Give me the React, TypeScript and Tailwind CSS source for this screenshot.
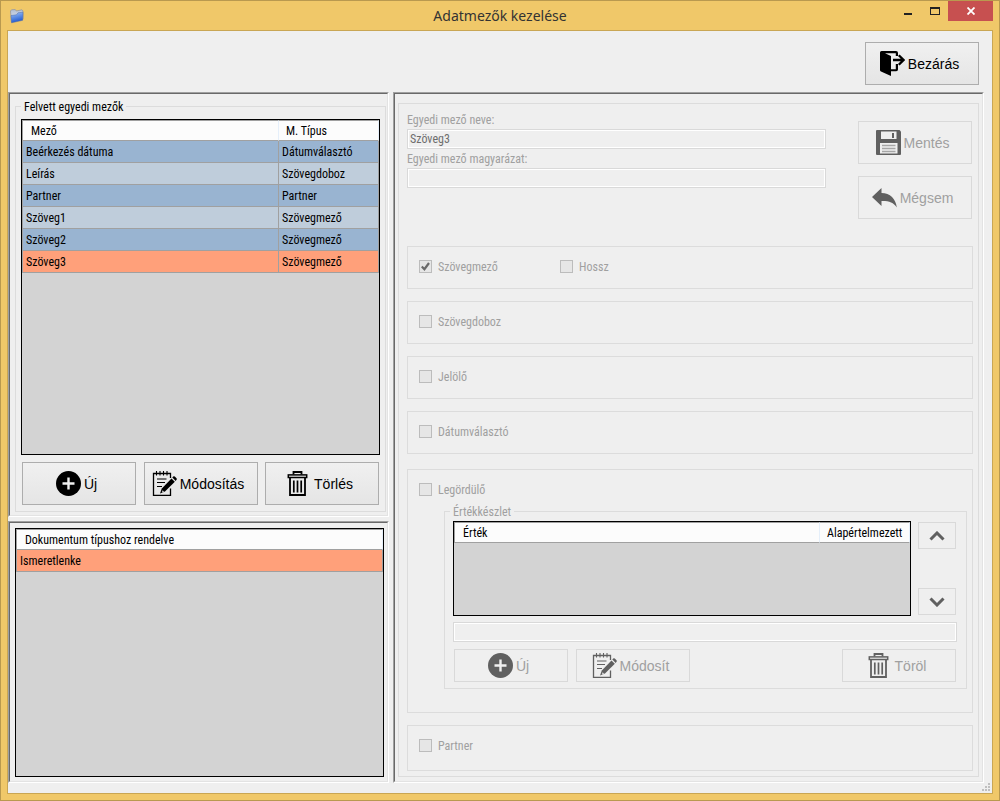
import { useId, type ReactNode } from "react";

function FolderIcon() {
  return (
    <svg width="16" height="16" viewBox="0 0 16 16" aria-hidden="true">
      <defs>
        <linearGradient id="folder-back" x1="0" y1="0" x2="0" y2="1">
          <stop offset="0" stopColor="#b4bfd2" />
          <stop offset="1" stopColor="#e4ecf8" />
        </linearGradient>
        <linearGradient id="folder-front" x1="0" y1="0" x2="0.3" y2="1">
          <stop offset="0" stopColor="#a9c8f4" />
          <stop offset="0.5" stopColor="#5f8fe6" />
          <stop offset="1" stopColor="#2358cc" />
        </linearGradient>
      </defs>
      <path d="M1.500 3 L2.500 1.800 L6.300 1.600 L7.300 3 L13 1.800 L14 3 L14 11 L2.500 14 Z" fill="url(#folder-back)" stroke="#7d8aa5" strokeWidth="0.600" />
      <path d="M2 7.500 L7.500 6.800 L9 4.800 L14 4.200 L13.700 12.300 L2.500 14.800 Z" fill="url(#folder-front)" stroke="#4a69ab" strokeWidth="0.500" />
    </svg>
  );
}

function ExitIcon() {
  return (
    <svg width="25" height="25" viewBox="0 0 25 25" fill="currentColor" aria-hidden="true">
      <path d="M0 1.500 Q0 0 1.500 0 H16 Q18 0 18 2 V5 H15.800 V2.200 H5 L11 5 V18.200 H15.800 V13 H18 V18.500 Q18 20.300 16.200 20.300 H11 V25 L1 20.500 Q0 20 0 19 Z" />
      <path d="M13 9 H23.500 M18.800 4.200 L23.600 9 L18.800 13.800" fill="none" stroke="currentColor" strokeWidth="2.300" />
    </svg>
  );
}

function PlusCircleIcon() {
  return (
    <svg width="25" height="25" viewBox="0 0 25 25" aria-hidden="true">
      <circle cx="12.500" cy="12.500" r="12.500" fill="currentColor" />
      <path d="M12.500 6.500 V18.500 M6.500 12.500 H18.500" stroke="#f0f0f0" strokeWidth="2.400" />
    </svg>
  );
}

function NotepadIcon() {
  return (
    <svg width="25" height="25" viewBox="0 0 25 25" fill="none" stroke="currentColor" aria-hidden="true">
      <path d="M18.500 7 V2.500 H1.500 V24.300 H18.500 V17.500" strokeWidth="1.300" />
      <path d="M4.500 0 V4.500 M8 0 V4.500 M11.500 0 V4.500 M15 0 V4.500" strokeWidth="1.100" />
      <path d="M5 8 H14.500 M5 11.500 H13 M5 15.500 H10" strokeWidth="1.100" />
      <path d="M8 22.500 L9.800 17.500 L19.500 7.500 L22.800 10.800 L13 20.500 Z" fill="currentColor" stroke="none" />
      <path d="M20.300 6.600 L21.200 5.600 Q22 4.900 22.800 5.600 L24.500 7.200 Q25.200 8 24.500 8.800 L23.700 9.900 Z" fill="currentColor" stroke="none" />
      <path d="M10 21.500 L10.600 19.300 L12 20.700 Z" fill="#f0f0f0" stroke="none" />
    </svg>
  );
}

function TrashIcon() {
  return (
    <svg width="25" height="25" viewBox="0 0 25 25" fill="none" stroke="currentColor" aria-hidden="true">
      <path d="M7.500 3.500 V1 H15.500 V3.500" strokeWidth="1.800" />
      <rect x="2.300" y="3.900" width="18.400" height="2.600" strokeWidth="1.500" />
      <path d="M4 7 V24 H19 V7" strokeWidth="1.800" />
      <path d="M7.800 9.500 V21.500 M11.500 9.500 V21.500 M15.200 9.500 V21.500" strokeWidth="1.700" />
    </svg>
  );
}

function FloppyIcon() {
  return (
    <svg width="25" height="25" viewBox="0 0 25 25" aria-hidden="true">
      <path d="M1 0 H23.500 L25 1.500 V24 Q25 25 24 25 H1 Q0 25 0 24 V1 Q0 0 1 0 Z" fill="currentColor" />
      <rect x="5" y="1.500" width="15.500" height="7.500" fill="#efefef" />
      <rect x="16" y="3" width="2" height="5" fill="currentColor" />
      <rect x="4" y="13" width="17.500" height="10.500" fill="#efefef" />
      <path d="M6 15.500 H19.500 M6 18.500 H19.500 M6 21.500 H19.500" stroke="#a6a6a6" strokeWidth="1.300" />
    </svg>
  );
}

function UndoIcon() {
  return (
    <svg width="25" height="25" viewBox="0 0 25 25" fill="currentColor" aria-hidden="true">
      <path d="M0 12 L9.500 3 V8 C18 8 24 14 24.800 22.500 C21.500 17.500 17 15.800 9.500 16 V21 Z" />
    </svg>
  );
}

function ChevronIcon({ down = false }: { down?: boolean }) {
  return (
    <svg width="16" height="10" viewBox="0 0 16 10" fill="none" stroke="currentColor" strokeWidth="3" aria-hidden="true">
      <path d={down ? "M1.500 1.500 L8 8 L14.500 1.500" : "M1.500 8.500 L8 2 L14.500 8.500"} />
    </svg>
  );
}

function PushButton({ icon, children, disabled = false, compact = false }: { icon: ReactNode; children: ReactNode; disabled?: boolean; compact?: boolean }) {
  const height = compact ? "h-[33px]" : "h-[43px]";
  const look = disabled
    ? "border-[#d9d9d9] bg-[#efefef]"
    : "border-[#adadad] bg-linear-to-b from-[#f0f0f0] to-[#e5e5e5] hover:border-[#7eb4ea]";
  return (
    <button type="button" disabled={disabled} className={`flex w-[114px] shrink-0 items-center justify-center gap-[3px] border pr-[5px] font-['Liberation_Sans',Arial,sans-serif] text-sm ${height} ${look}`}>
      <span className={disabled ? "text-[#606060]" : "text-black"}>{icon}</span>
      <span className={disabled ? "text-[#a0a0a0]" : "text-black"}>{children}</span>
    </button>
  );
}

function ArrowButton({ down = false, label }: { down?: boolean; label: string }) {
  return (
    <button type="button" disabled aria-label={label} className="flex h-[27px] w-[38px] items-center justify-center border border-[#d9d9d9] bg-[#efefef] text-[#606060]">
      <ChevronIcon down={down} />
    </button>
  );
}

function SunkenPanel({ children }: { children: ReactNode }) {
  return (
    <div className="flex min-w-0 border border-t-[#a0a0a0] border-r-white border-b-white border-l-[#a0a0a0]">
      <div className="flex min-w-0 flex-1 border border-t-[#696969] border-r-[#e3e3e3] border-b-[#e3e3e3] border-l-[#696969]">
        {children}
      </div>
    </div>
  );
}

function HeaderCell({ children, first = false }: { children: ReactNode; first?: boolean }) {
  return (
    <th scope="col" className={`h-[21px] border-t border-r border-b border-t-[#a0a0a0] border-r-[#e5effa] border-b-[#a0a0a0] bg-[#fcfcfc] p-0 pt-[2px] text-left font-normal ${first ? "border-l border-l-[#a0a0a0] pl-2" : "pl-[7px]"}`}>
      {children}
    </th>
  );
}

function Cell({ children, first = false }: { children: ReactNode; first?: boolean }) {
  return (
    <td className={`h-[22px] border-r border-b border-[#a0a0a0] p-0 pt-[2px] pl-[3px] ${first ? "border-l" : ""}`}>{children}</td>
  );
}

function TextBox({ id, value = "", label }: { id?: string; value?: string; label?: string }) {
  return (
    <div className="flex h-5 border border-[#d9d9d9] bg-white p-px">
      <input id={id} type="text" disabled defaultValue={value} aria-label={label} className="w-full min-w-0 bg-[#efefef] px-px text-[#6d6d6d]" />
    </div>
  );
}

function TextField({ label, value = "" }: { label: string; value?: string }) {
  const id = useId();
  return (
    <>
      <label htmlFor={id} className="h-[19px] leading-[21px] text-[#a0a0a0]">{label}</label>
      <TextBox id={id} value={value} />
    </>
  );
}

function CheckOption({ label, checked = false, className = "" }: { label: string; checked?: boolean; className?: string }) {
  return (
    <label className={`flex h-[15px] items-center gap-[6px] text-[#a0a0a0] ${className}`}>
      <span className="grid size-[13px] place-items-center">
        <input type="checkbox" disabled defaultChecked={checked} className="col-start-1 row-start-1 size-[13px] appearance-none border border-[#bcbcbc] bg-[#e6e6e6]" />
        {checked && (
          <svg width="9" height="9" viewBox="0 0 9 9" className="col-start-1 row-start-1 text-[#6a6a6a]" fill="none" stroke="currentColor" strokeWidth="2.200" aria-hidden="true">
            <path d="M0.800 4.500 L3.400 7.200 L8 1" />
          </svg>
        )}
      </span>
      <span className="pt-[2px]">{label}</span>
    </label>
  );
}

function OptionGroup({ children, className = "h-[43px]" }: { children: ReactNode; className?: string }) {
  return <div className={`border border-[#dcdcdc] pt-3 ${className}`}>{children}</div>;
}

const fields = [
  { name: "Beérkezés dátuma", type: "Dátumválasztó" },
  { name: "Leírás", type: "Szövegdoboz" },
  { name: "Partner", type: "Partner" },
  { name: "Szöveg1", type: "Szövegmező" },
  { name: "Szöveg2", type: "Szövegmező" },
  { name: "Szöveg3", type: "Szövegmező" },
];
const selectedField = "Szöveg3";

function rowColor(name: string, index: number) {
  if (name === selectedField) return "bg-[#ffa07a]";
  return index % 2 === 0 ? "bg-[#99b4d1]" : "bg-[#bfcddb]";
}

function TitleBar() {
  return (
    <header className="grid h-[29px] grid-cols-[1fr_auto_1fr] items-start">
      <div className="pt-[7px] pl-2">
        <FolderIcon />
      </div>
      <h1 className="font-['Noto_Sans','Open_Sans',sans-serif] text-sm leading-[29px] text-[#333333]">Adatmezők kezelése</h1>
      <div className="flex justify-end pr-[6px]">
        <button type="button" aria-label="Kis méret" className="flex h-5 w-[27px] items-center justify-center pl-[2px] text-[#222222]">
          <svg width="9" height="20" viewBox="0 0 9 20"><rect y="12" width="8" height="2" fill="currentColor" /></svg>
        </button>
        <button type="button" aria-label="Teljes méret" className="flex h-5 w-[27px] items-center justify-center pl-[2px] text-[#222222]">
          <svg width="11" height="20" viewBox="0 0 11 20"><path d="M0 6 H10 V14 H0 Z M1 8 V13 H9 V8 Z" fill="currentColor" fillRule="evenodd" /></svg>
        </button>
        <button type="button" aria-label="Bezárás" className="flex h-5 w-[45px] items-center justify-center bg-[#c75050] text-white">
          <svg width="8" height="8" viewBox="0 0 8 8" stroke="currentColor" strokeWidth="1.800"><path d="M0.500 0.500 L7.500 7.500 M7.500 0.500 L0.500 7.500" /></svg>
        </button>
      </div>
    </header>
  );
}

function FieldListPanel() {
  return (
    <SunkenPanel>
      <fieldset className="mt-[6px] mr-px mb-[3px] ml-[5px] flex min-w-0 flex-1 flex-col border border-[#dcdcdc] px-[5px] pt-[6px] pb-[6px]">
        <legend className="h-[13px] px-[3px] leading-[15px]">Felvett egyedi mezők</legend>
        <div className="flex-1 border border-black bg-[#d3d3d3]">
          <table className="w-full table-fixed border-separate border-spacing-0">
            <colgroup>
              <col className="w-[72%]" />
              <col />
            </colgroup>
            <thead>
              <tr>
                <HeaderCell first>Mező</HeaderCell>
                <HeaderCell>M. Típus</HeaderCell>
              </tr>
            </thead>
            <tbody>
              {fields.map((field, index) => (
                <tr key={field.name} className={rowColor(field.name, index)}>
                  <Cell first>{field.name}</Cell>
                  <Cell>{field.type}</Cell>
                </tr>
              ))}
            </tbody>
          </table>
        </div>
        <div className="mt-[7px] flex justify-between px-px">
          <PushButton icon={<PlusCircleIcon />}>Új</PushButton>
          <PushButton icon={<NotepadIcon />}>Módosítás</PushButton>
          <PushButton icon={<TrashIcon />}>Törlés</PushButton>
        </div>
      </fieldset>
    </SunkenPanel>
  );
}

function DocumentTypePanel() {
  return (
    <SunkenPanel>
      <div className="mt-[5px] mr-[3px] mb-1 ml-[5px] min-w-0 flex-1 border border-black bg-[#d3d3d3]">
        <table className="w-full border-separate border-spacing-0">
          <thead>
            <tr>
              <HeaderCell first>Dokumentum típushoz rendelve</HeaderCell>
            </tr>
          </thead>
          <tbody>
            <tr className="bg-[#ffa07a]">
              <Cell first>Ismeretlenke</Cell>
            </tr>
          </tbody>
        </table>
      </div>
    </SunkenPanel>
  );
}

function ValueListGroup() {
  return (
    <fieldset className="mt-2 mr-[5px] ml-9 min-w-0 border border-[#dcdcdc] pt-[3px] pr-[9px] pb-[6px] pl-[5px]">
      <legend className="h-[13px] px-[3px] leading-[15px] text-[#a0a0a0]">Értékkészlet</legend>
      <div className="flex flex-col pl-[3px]">
        <div className="flex gap-[7px] pr-px">
          <div className="h-[95px] flex-1 border border-black bg-[#d3d3d3]">
            <table className="w-full table-fixed border-separate border-spacing-0">
              <colgroup>
                <col />
                <col className="w-[90px]" />
              </colgroup>
              <thead>
                <tr>
                  <HeaderCell first>Érték</HeaderCell>
                  <HeaderCell>Alapértelmezett</HeaderCell>
                </tr>
              </thead>
            </table>
          </div>
          <div className="flex flex-col justify-between py-px">
            <ArrowButton label="Fel" />
            <ArrowButton label="Le" down />
          </div>
        </div>
        <div className="mt-[6px]">
          <TextBox label="Érték" />
        </div>
        <div className="mt-[7px] flex gap-2 px-px">
          <PushButton icon={<PlusCircleIcon />} disabled compact>Új</PushButton>
          <PushButton icon={<NotepadIcon />} disabled compact>Módosít</PushButton>
          <div className="ml-auto">
            <PushButton icon={<TrashIcon />} disabled compact>Töröl</PushButton>
          </div>
        </div>
      </div>
    </fieldset>
  );
}

function EditorPanel() {
  return (
    <SunkenPanel>
      <div className="mt-[9px] mr-[3px] mb-1 ml-[3px] flex min-w-0 flex-1 flex-col border border-[#dcdcdc] pt-[6px] pr-[5px] pb-[5px] pl-2">
        <div className="mb-[27px] flex gap-8 pr-px">
          <div className="flex min-w-0 flex-1 flex-col">
            <TextField label="Egyedi mező neve:" value="Szöveg3" />
            <TextField label="Egyedi mező magyarázat:" />
          </div>
          <div className="flex flex-col gap-3 pt-[11px]">
            <PushButton icon={<FloppyIcon />} disabled>Mentés</PushButton>
            <PushButton icon={<UndoIcon />} disabled>Mégsem</PushButton>
          </div>
        </div>
        <div className="flex flex-1 flex-col gap-3">
          <OptionGroup>
            <div className="flex pl-[11px]">
              <CheckOption label="Szövegmező" checked className="w-[141px]" />
              <CheckOption label="Hossz" />
            </div>
          </OptionGroup>
          <OptionGroup>
            <CheckOption label="Szövegdoboz" className="pl-[11px]" />
          </OptionGroup>
          <OptionGroup>
            <CheckOption label="Jelölő" className="pl-[11px]" />
          </OptionGroup>
          <OptionGroup>
            <CheckOption label="Dátumválasztó" className="pl-[11px]" />
          </OptionGroup>
          <OptionGroup className="mt-[3px] flex-1 pb-5">
            <CheckOption label="Legördülő" className="pl-[11px]" />
            <ValueListGroup />
          </OptionGroup>
          <OptionGroup className="h-[46px]">
            <CheckOption label="Partner" className="pl-[11px]" />
          </OptionGroup>
        </div>
      </div>
    </SunkenPanel>
  );
}

function ResizeGrip() {
  return (
    <svg width="8" height="8" viewBox="0 0 8 8" className="absolute right-[2px] bottom-[2px]" fill="#bfbfbf" aria-hidden="true">
      <path d="M6 0h2v2h-2z M3 3h2v2h-2z M6 3h2v2h-2z M0 6h2v2h-2z M3 6h2v2h-2z M6 6h2v2h-2z" />
    </svg>
  );
}

export default function App() {
  return (
    <div className="flex min-h-screen flex-col border border-[#b9994f] bg-[#f0c869] text-black">
      <TitleBar />
      <main className="relative mx-[6px] mb-[6px] flex flex-1 flex-col border border-[#c9a654] bg-[#efefef]">
        <div className="flex justify-end pt-[11px] pr-[13px] pb-[7px]">
          <PushButton icon={<ExitIcon />}>Bezárás</PushButton>
        </div>
        <div className="grid flex-1 grid-cols-[381fr_591fr] gap-1 pr-2 pb-[10px] font-['Roboto_Condensed','Liberation_Sans_Narrow',Roboto,sans-serif] text-xs leading-[15px]">
          <div className="grid min-w-0 grid-rows-[425fr_262fr] gap-1">
            <FieldListPanel />
            <DocumentTypePanel />
          </div>
          <EditorPanel />
        </div>
        <ResizeGrip />
      </main>
    </div>
  );
}
